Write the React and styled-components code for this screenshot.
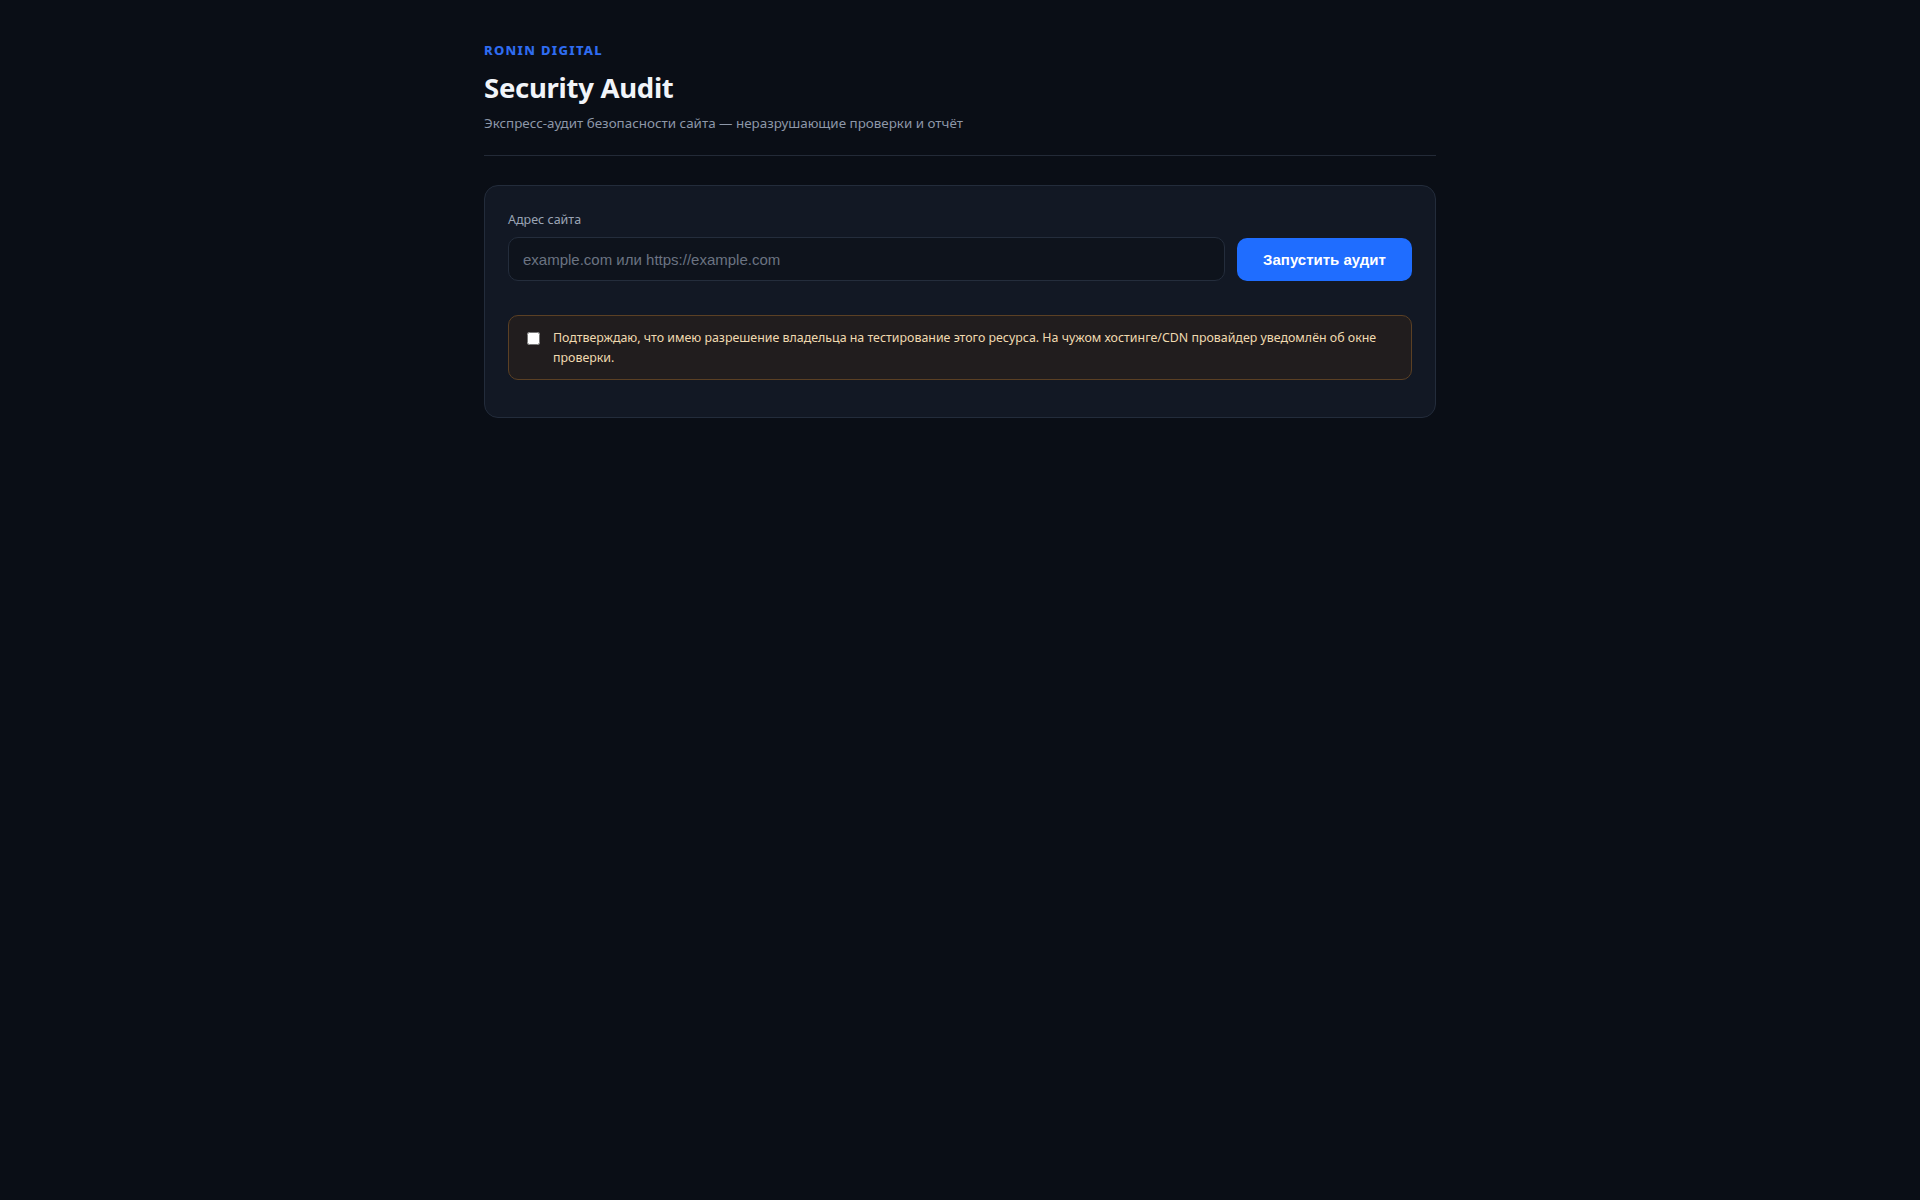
import React, { useState } from "react";
import styled, { createGlobalStyle } from "styled-components";

const GlobalStyle = createGlobalStyle`
  html, body {
    margin: 0;
    padding: 0;
    background: #0a0e16;
    min-height: 100%;
  }
  body {
    font-family: "Noto Sans", "Open Sans", sans-serif;
    color: #e6ebf2;
  }
  * {
    box-sizing: border-box;
  }
`;

const Page = styled.div`
  min-height: 1200px;
  background: #0a0e16;
`;

const Wrapper = styled.main`
  max-width: 952px;
  margin: 0 auto;
  padding-top: 41px;
`;

const Header = styled.header`
  display: flex;
  flex-direction: column;
  padding-bottom: 22px;
  border-bottom: 1px solid #232a37;
`;

const Brand = styled.div`
  font-size: 13px;
  line-height: 18px;
  font-weight: 800;
  letter-spacing: 0.1em;
  text-transform: uppercase;
  color: #2f6cf0;
`;

const Title = styled.h1`
  margin: 12px 0 0;
  font-size: 27.5px;
  line-height: 34px;
  font-weight: 700;
  color: #f1f4f9;
  letter-spacing: -0.01em;
`;

const Subtitle = styled.p`
  margin: 8px 0 0;
  font-size: 13.4px;
  line-height: 20px;
  color: #8d97a8;
`;

const Card = styled.section`
  margin-top: 29px;
  background: #121824;
  border: 1px solid #232c3b;
  border-radius: 14px;
  padding: 25px 23px 25px;
`;

const Label = styled.label`
  display: block;
  font-size: 12.5px;
  line-height: 18px;
  color: #9aa4b5;
  margin-bottom: 8px;
`;

const Row = styled.div`
  display: flex;
  align-items: center;
  gap: 12px;
`;

const Input = styled.input`
  flex: 1;
  height: 44px;
  background: #0e131c;
  border: 1px solid #242d3c;
  border-radius: 10px;
  padding: 0 14px;
  font-family: "Liberation Sans", Arial, sans-serif;
  font-size: 15px;
  color: #e6ebf2;
  outline: none;

  &::placeholder {
    color: #6b7382;
  }
`;

const Button = styled.button`
  width: 175px;
  height: 43px;
  border: none;
  border-radius: 10px;
  background: #1f6dff;
  color: #ffffff;
  font-family: "Liberation Sans", Arial, sans-serif;
  font-size: 15px;
  font-weight: 700;
  cursor: pointer;
`;

const Warning = styled.div`
  margin: 34px 0 12px;
  display: flex;
  align-items: flex-start;
  gap: 13px;
  padding: 12px 14px 11px;
  background: #211d1e;
  border: 1px solid #5b4024;
  border-radius: 10px;
`;

const Check = styled.input`
  width: 13px;
  height: 13px;
  margin: 4px 0 0 4px;
  flex-shrink: 0;
`;

const WarningText = styled.span`
  font-size: 12.4px;
  line-height: 20px;
  color: #f0dab0;
`;

const App = () => {
  const [url, setUrl] = useState("");
  const [agreed, setAgreed] = useState(false);

  return (
    <Page>
      <GlobalStyle />
      <Wrapper>
        <Header>
          <Brand>Ronin Digital</Brand>
          <Title>Security Audit</Title>
          <Subtitle>
            Экспресс-аудит безопасности сайта — неразрушающие проверки и отчёт
          </Subtitle>
        </Header>
        <Card>
          <Label htmlFor="site">Адрес сайта</Label>
          <Row>
            <Input
              id="site"
              type="text"
              placeholder="example.com или https://example.com"
              value={url}
              onChange={(e) => setUrl(e.target.value)}
            />
            <Button>Запустить аудит</Button>
          </Row>
          <Warning>
            <Check
              type="checkbox"
              checked={agreed}
              onChange={(e) => setAgreed(e.target.checked)}
            />
            <WarningText>
              Подтверждаю, что имею разрешение владельца на тестирование этого
              ресурса. На чужом хостинге/CDN провайдер уведомлён об окне
              проверки.
            </WarningText>
          </Warning>
        </Card>
      </Wrapper>
    </Page>
  );
};

export default App;
